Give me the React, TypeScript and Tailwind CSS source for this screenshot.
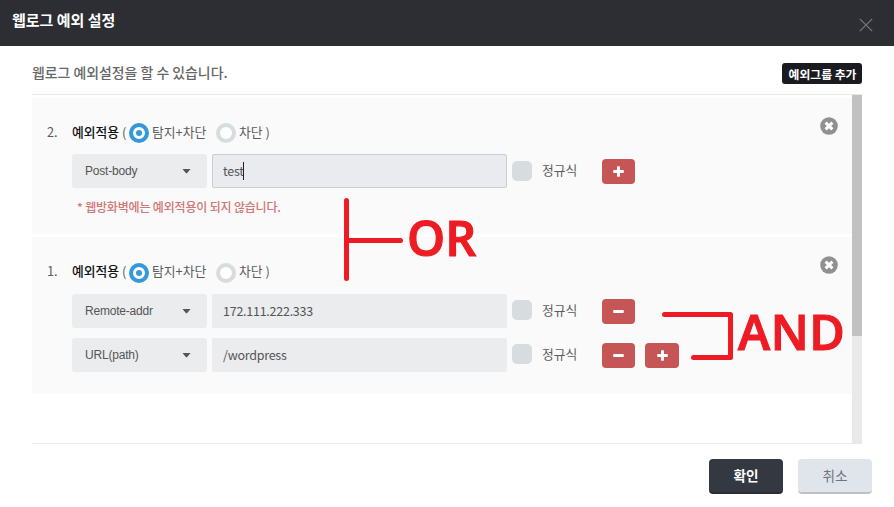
import React from "react";

type RowProps = {
  field: string;
  value: string;
  focused?: boolean;
  actions: ("minus" | "plus")[];
  boxOffset?: string;
};

function ActionButton({ kind }: { kind: "minus" | "plus" }) {
  return (
    <button className="flex h-[25px] w-[33px] items-center justify-center rounded-[4px] bg-[#c65656] last:not-first:w-[34px]">
      <svg width="11" height="11" viewBox="0 0 11 11" fill="#fff">
        <rect x="0.2" y="4" width="10.6" height="3" rx="0.7" />
        {kind === "plus" && <rect x="4" y="0.2" width="3" height="10.6" rx="0.7" />}
      </svg>
    </button>
  );
}

function Radio({ checked }: { checked?: boolean }) {
  return checked ? (
    <span className="flex size-5 items-center justify-center rounded-full border-[4px] border-[#3498db] bg-white">
      <span className="size-[6px] rounded-full bg-[#3498db]" />
    </span>
  ) : (
    <span className="size-5 rounded-full border-[4px] border-[#d7dcde] bg-white" />
  );
}

function ConditionRow({ field, value, focused, actions, boxOffset = "mt-[6px]" }: RowProps) {
  return (
    <div className="flex h-[34px] items-start">
      <div className="flex h-[34px] w-[135px] items-center justify-between rounded-[3px] bg-[#ebecee] pr-4 pl-[13px] font-['Liberation_Sans',sans-serif] text-[12px] tracking-[-0.2px] text-[#555]">
        <span>{field}</span>
        <svg width="9" height="5" viewBox="0 0 9 5" fill="#555">
          <path d="M0.5 0H8.5L5 4.3H4Z" />
        </svg>
      </div>
      <div
        className={
          focused
            ? "ml-[5px] flex h-[34px] w-[295px] items-center rounded-[2px] border border-[#c9cdd3] bg-[#e9ebee] pl-[10px] text-[12.5px] tracking-[-0.25px] text-[#555]"
            : "ml-[5px] flex h-[34px] w-[295px] items-center rounded-[2px] border border-[#ebecee] bg-[#ebecee] pl-[10px] text-[12.5px] tracking-[-0.25px] text-[#555]"
        }
      >
        <span>{value}</span>
        {focused && <span className="-ml-px h-[18px] w-px bg-[#222]" />}
      </div>
      <span className={`ml-[5px] size-5 rounded-[5px] bg-[#d7dcdf] ${boxOffset}`} />
      <span className="mt-[6px] ml-[10px] w-[60px] text-[12.8px] leading-5 text-[#5c5c5c]">정규식</span>
      <div className="mt-[5px] flex gap-[10px]">
        {actions.map((a) => (
          <ActionButton key={a} kind={a} />
        ))}
      </div>
    </div>
  );
}

function GroupHeader({ index, radioOffset }: { index: string; radioOffset: string }) {
  return (
    <div className="flex h-5 items-center text-[12.8px] leading-5 whitespace-nowrap text-[#5c5c5c]">
      <span className="w-[25px]">{index}</span>
      <span className="w-[50px] font-medium text-[#111]">예외적용</span>
      <span className="w-[7px]">(</span>
      <span className={`flex ${radioOffset}`}>
        <Radio checked />
      </span>
      <span className="ml-[3px] w-[64px]">탐지+차단</span>
      <span className={`flex ${radioOffset}`}>
        <Radio />
      </span>
      <span className="ml-[3px]">차단 )</span>
      <svg className="-mt-[13px] ml-auto" width="18" height="18" viewBox="0 0 18 18">
        <circle cx="9" cy="9" r="8.8" fill="#909090" />
        <path d="M5.6 5.6L12.4 12.4M12.4 5.6L5.6 12.4" stroke="#fff" strokeWidth="3" />
      </svg>
    </div>
  );
}

export default function App() {
  return (
    <div className="relative flex h-[507px] w-[894px] flex-col overflow-hidden bg-white font-['Noto_Sans_CJK_KR',sans-serif]">
      <header className="flex h-[46px] items-start justify-between bg-[#2c2e33] pr-[21px] pl-3">
        <h1 className="mt-[10px] text-[15px] leading-5 font-bold text-white">웹로그 예외 설정</h1>
        <svg className="mt-[18px]" width="14" height="14" viewBox="0 0 14 14" stroke="#77797c" strokeWidth="1.2">
          <path d="M0.8 0.8L13.2 13.2M13.2 0.8L0.8 13.2" />
        </svg>
      </header>

      <div className="ml-8 flex h-12 w-[830px] items-start justify-between">
        <p className="mt-4 text-[13.9px] leading-5 font-medium text-[#666]">웹로그 예외설정을 할 수 있습니다.</p>
        <button className="mt-[17px] h-[21px] w-20 rounded-[3px] bg-[#191b20] pl-px text-[11.8px] leading-5 font-bold whitespace-nowrap text-white">
          예외그룹 추가
        </button>
      </div>

      <div className="ml-8 flex h-[350px] w-[830px] border-y border-[#e9e9e9]">
        <div className="flex w-[820px] flex-col gap-[3px] pt-[3px]">
          <section className="h-[136px] bg-[#fafafa] pt-6 pr-[14px] pl-[15px]">
            <GroupHeader index="2." radioOffset="mt-[2px]" />
            <div className="mt-3 ml-[25px]">
              <ConditionRow field="Post-body" value="test" focused actions={["plus"]} boxOffset="mt-[7px]" />
              <p className="mt-[10px] ml-[5px] text-[12px] leading-[18px] font-medium tracking-[-0.18px] text-[#d27575]">
                * 웹방화벽에는 예외적용이 되지 않습니다.
              </p>
            </div>
          </section>
          <section className="h-[157px] bg-[#fafafa] pt-6 pr-[14px] pl-[15px]">
            <GroupHeader index="1." radioOffset="mt-[4px]" />
            <div className="mt-[13px] ml-[25px] flex flex-col gap-[10px]">
              <ConditionRow field="Remote-addr" value="172.111.222.333" actions={["minus"]} />
              <ConditionRow field="URL(path)" value="/wordpress" actions={["minus", "plus"]} />
            </div>
          </section>
        </div>
        <div className="w-[10px] bg-[#e9e9e9]">
          <div className="h-[241px] bg-[#c1c1c1]" />
        </div>
      </div>

      <footer className="mt-[15px] mr-[22px] flex justify-end gap-[15px] text-[13.6px]">
        <button className="h-[35px] w-[74px] rounded-[4px] border-b-2 border-[#2a2d33] bg-[#343840] font-bold text-white">
          확인
        </button>
        <button className="h-[35px] w-[74px] rounded-[4px] border-b-2 border-[#bcc1c7] bg-[#e0e5ec] text-[#6c7680]">
          취소
        </button>
      </footer>

      {/* Annotations drawn over the dialog */}
      <svg
        className="absolute inset-0"
        width="894"
        height="507"
        fill="none"
        stroke="#ed1c24"
        strokeWidth="5"
        strokeLinecap="round"
        strokeLinejoin="round"
      >
        <path d="M346.5 200.5V278.5M346.5 240.5H400.5" />
        <path d="M664.5 314.5H730.5V357.5H693.5" />
      </svg>
      <span className="absolute top-[207px] left-[407px] font-['Open_Sans',sans-serif] text-[48.5px] leading-[60px] font-semibold text-[#ed1c24] [-webkit-text-stroke:1.2px_#ed1c24]">
        OR
      </span>
      <span className="absolute top-[301px] left-[738px] font-['Open_Sans',sans-serif] text-[48.5px] leading-[60px] font-semibold tracking-[0.6px] text-[#ed1c24] [-webkit-text-stroke:1.2px_#ed1c24]">
        AND
      </span>
    </div>
  );
}
